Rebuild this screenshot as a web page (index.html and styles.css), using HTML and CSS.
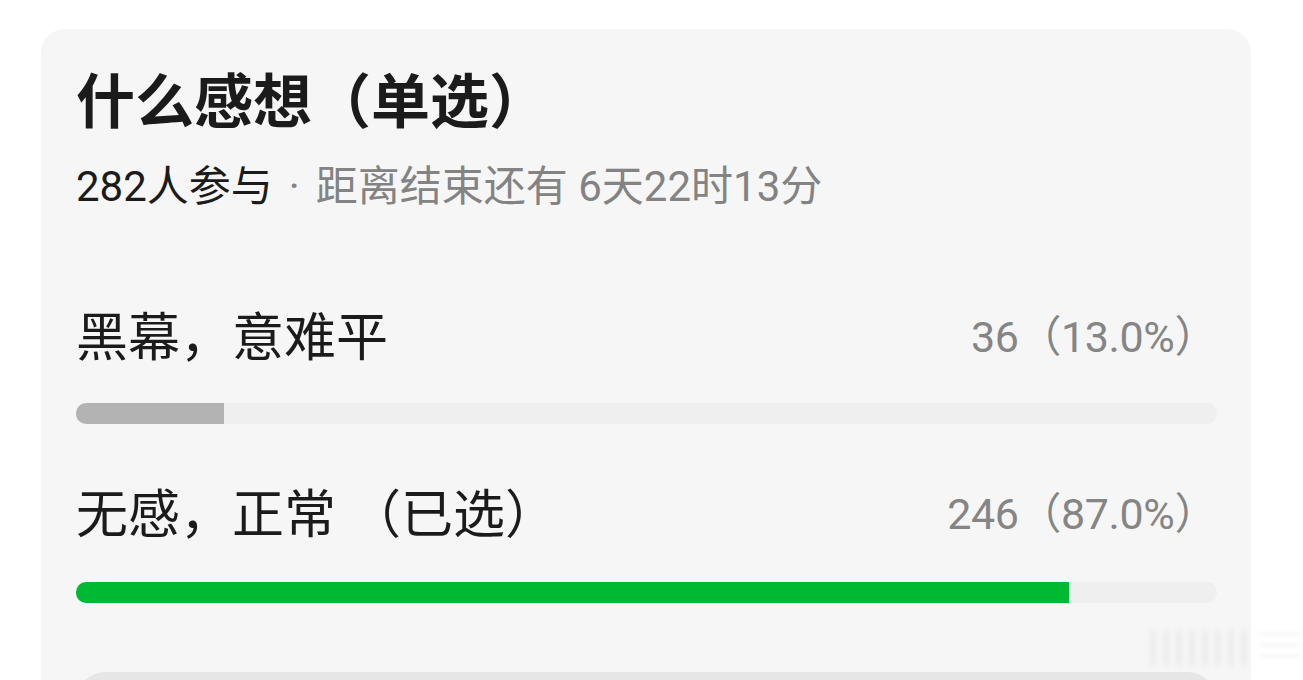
FILE: index.html
```html
<!DOCTYPE html>
<html lang="zh-CN">
<head>
    <meta charset="UTF-8">
    <meta name="viewport" content="width=device-width, initial-scale=1.0">
    <title>投票</title>
    <link rel="stylesheet" href="styles.css">
</head>
<body>

    <!-- Tarjeta de votación -->
    <div class="poll-card">
        <h1 class="poll-title">什么感想（单选）</h1>
        <p class="poll-meta">
            <span class="joined">282人参与</span><span class="dot">·</span><span class="remain">距离结束还有 6天22时13分</span>
        </p>

        <div class="option">
            <div class="option-row">
                <span class="option-name">黑幕，意难平</span>
                <span class="option-count">36（13.0%）</span>
            </div>
            <div class="bar"><div class="bar-fill" style="width: 13%"></div></div>
        </div>

        <div class="option option-second">
            <div class="option-row">
                <span class="option-name">无感，正常 （已选）</span>
                <span class="option-count">246（87.0%）</span>
            </div>
            <div class="bar"><div class="bar-fill picked" style="width: 87%"></div></div>
        </div>

        <div class="poll-button"></div>
    </div>

    <div class="mark"><span class="mark-bars"></span><span class="mark-lines"></span></div>

</body>
</html>
```

FILE: styles.css
```css
body {
    margin: 0;
    padding: 0;
    background-color: #fff;
    font-family: Roboto, "Noto Sans CJK SC", sans-serif;
    overflow: hidden;
}
.poll-card {
    margin: 29px 0 0 41px;
    width: 1210px;
    box-sizing: border-box;
    padding: 40px 34px 0 35px;
    height: 700px;
    background-color: #f6f6f6;
    border-radius: 24px 24px 0 0;
}
.poll-title {
    margin: 0;
    font-size: 59px;
    line-height: 68px;
    font-weight: 700;
    color: #1b1b1b;
}
.poll-meta {
    margin: 25px 0 0;
    font-size: 42px;
    line-height: 50px;
    white-space: nowrap;
}
.joined {
    color: #1b1b1b;
}
.dot {
    margin: 0 16px;
    color: #838383;
}
.remain {
    color: #838383;
}
.option {
    margin-top: 91px;
}
.option-second {
    margin-top: 56px;
}
.option-row {
    display: flex;
    justify-content: space-between;
    align-items: center;
    height: 60px;
}
.option-name {
    font-size: 52px;
    color: #1b1b1b;
}
.option-count {
    font-size: 43px;
    letter-spacing: -0.4px;
    color: #858585;
}
.bar {
    margin-top: 40px;
    height: 21px;
    border-radius: 10px;
    background-color: #efefef;
    overflow: hidden;
}
.option-second .bar {
    margin-top: 42px;
}
.bar-fill {
    height: 100%;
    background-color: #b3b3b3;
}
.bar-fill.picked {
    background-color: #00b932;
}
.poll-button {
    margin-top: 69px;
    height: 80px;
    border-radius: 30px;
    background-color: #e6e6e6;
}
/* marca de agua borrosa */
.mark {
    position: absolute;
    left: 1150px;
    top: 630px;
    display: flex;
    gap: 10px;
    filter: blur(2px);
    opacity: 0.45;
}
.mark-bars {
    width: 100px;
    height: 36px;
    background: repeating-linear-gradient(90deg, #e2e2e2 0 6px, transparent 6px 13px);
}
.mark-lines {
    width: 40px;
    height: 30px;
    margin-top: 3px;
    background: repeating-linear-gradient(180deg, #dcdcdc 0 2px, transparent 2px 11px);
}
```
